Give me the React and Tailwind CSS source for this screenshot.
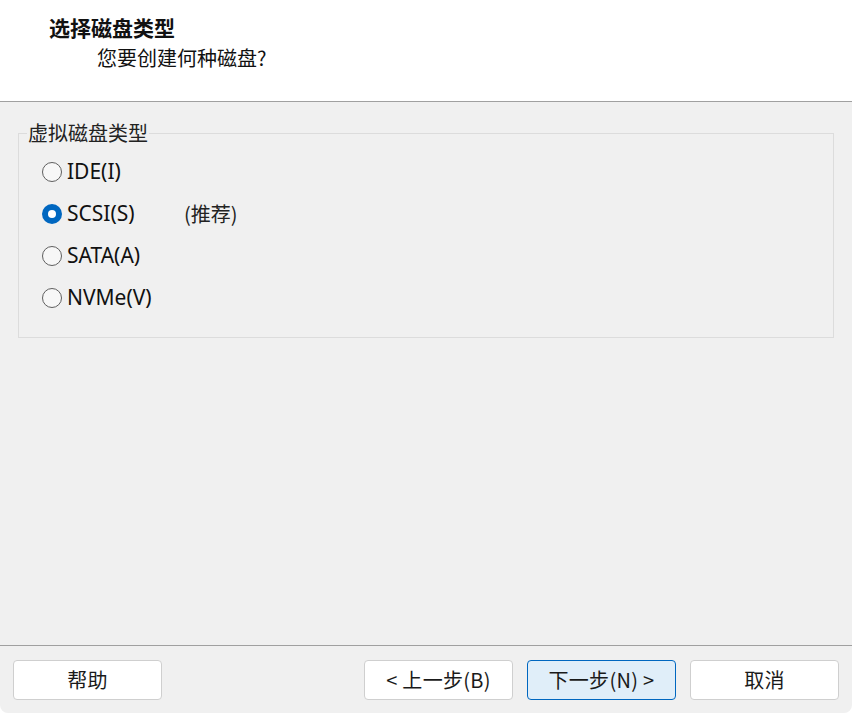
import React from 'react';

const cjk = { fontFamily: '"Noto Sans CJK SC", "Noto Sans", sans-serif' };
const ui = { fontFamily: '"Noto Sans", "Noto Sans CJK SC", sans-serif' };

const options = [
  { label: 'IDE(I)', checked: false },
  { label: 'SCSI(S)', checked: true, note: '(推荐)' },
  { label: 'SATA(A)', checked: false },
  { label: 'NVMe(V)', checked: false },
];

const Radio = ({ checked }) =>
  checked ? (
    <span className="w-[20px] h-[20px] rounded-full bg-[#0067c0] flex items-center justify-center shrink-0">
      <span className="w-[8px] h-[8px] rounded-full bg-white" />
    </span>
  ) : (
    <span className="w-[20px] h-[20px] rounded-full border border-[#5f5f5f] bg-[#f7f7f7] shrink-0" />
  );

const Button = ({ children, primary }) => (
  <button
    className={
      primary
        ? 'w-[149px] h-[40px] rounded-[4px] border border-[#0067c0] bg-[#e0eef9] text-[20px] tracking-[0.3px] text-[#1a1a1a]'
        : 'w-[149px] h-[40px] rounded-[4px] border border-[#cfcfcf] bg-white text-[20px] tracking-[0.3px] text-[#1a1a1a]'
    }
    style={cjk}
  >
    {children}
  </button>
);

export default function App() {
  return (
    <div className="w-[852px] h-[713px] flex flex-col bg-[#f0f0f0] overflow-hidden rounded-b-[8px]">
      <div className="h-[102px] bg-white border-b border-[#a0a0a0] shrink-0">
        <div className="pl-[49px] pt-[14px] text-[21px] leading-[26px] font-bold text-[#111]" style={cjk}>
          选择磁盘类型
        </div>
        <div className="pl-[97px] pt-[5px] text-[20px] leading-[26px] text-[#111]" style={cjk}>
          您要创建何种磁盘?
        </div>
      </div>

      <div className="flex-1 px-[18px] pt-[19px]">
        <fieldset className="border border-[#dcdcdc] h-[217px] pl-[8px] pr-0 pt-[6px] m-0 w-[816px]">
          <legend className="px-[1px] text-[20px] leading-[24px] text-[#222]" style={cjk}>
            虚拟磁盘类型
          </legend>
          <div className="flex flex-col pl-[15px]">
            {options.map((o) => (
              <div key={o.label} className="h-[42px] flex items-center">
                <Radio checked={o.checked} />
                <span className="ml-[5px] text-[21px] text-[#111] w-[117px]" style={ui}>
                  {o.label}
                </span>
                {o.note && (
                  <span className="text-[20px] text-[#222]" style={cjk}>
                    {o.note}
                  </span>
                )}
              </div>
            ))}
          </div>
        </fieldset>
      </div>

      <div className="h-[68px] border-t border-[#a0a0a0] shrink-0 flex items-start pt-[14px] px-[13px]">
        <Button>帮助</Button>
        <div className="flex-1" />
        <div className="flex gap-[14px]">
          <Button>&lt; 上一步(B)</Button>
          <Button primary>下一步(N) &gt;</Button>
          <Button>取消</Button>
        </div>
      </div>
    </div>
  );
}
